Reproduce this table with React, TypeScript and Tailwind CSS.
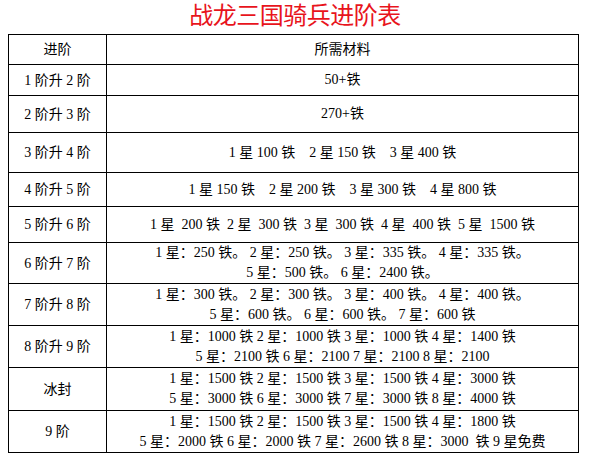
import React from "react";

type Row = { label: string; lines: string[]; h: string };

const rows: Row[] = [
  { label: "1 阶升 2 阶", lines: ["50+铁"], h: "h-[31px]" },
  { label: "2 阶升 3 阶", lines: ["270+铁"], h: "h-[37px]" },
  { label: "3 阶升 4 阶", lines: ["1 星 100 铁    2 星 150 铁    3 星 400 铁"], h: "h-[40px]" },
  { label: "4 阶升 5 阶", lines: ["1 星 150 铁    2 星 200 铁    3 星 300 铁    4 星 800 铁"], h: "h-[34px]" },
  { label: "5 阶升 6 阶", lines: ["1 星  200 铁  2 星  300 铁  3 星  300 铁  4 星  400 铁  5 星  1500 铁"], h: "h-[36px]" },
  {
    label: "6 阶升 7 阶",
    lines: ["1 星：250 铁。 2 星：250 铁。 3 星：335 铁。 4 星：335 铁。", "5 星：500 铁。 6 星：2400 铁。"],
    h: "h-[41px]",
  },
  {
    label: "7 阶升 8 阶",
    lines: ["1 星：300 铁。 2 星：300 铁。 3 星：400 铁。 4 星：400 铁。", "5 星：600 铁。 6 星：600 铁。 7 星：600 铁"],
    h: "h-[42px]",
  },
  {
    label: "8 阶升 9 阶",
    lines: ["1 星：1000 铁 2 星：1000 铁 3 星：1000 铁 4 星：1400 铁", "5 星：2100 铁 6 星：2100 7 星：2100 8 星：2100"],
    h: "h-[42px]",
  },
  {
    label: "冰封",
    lines: ["1 星：1500 铁 2 星：1500 铁 3 星：1500 铁 4 星：3000 铁", "5 星：3000 铁 6 星：3000 铁 7 星：3000 铁 8 星：4000 铁"],
    h: "h-[43px]",
  },
  {
    label: "9 阶",
    lines: ["1 星：1500 铁 2 星：1500 铁 3 星：1500 铁 4 星：1800 铁", "5 星：2000 铁 6 星：2000 铁 7 星：2600 铁 8 星：3000  铁 9 星免费"],
    h: "h-[42px]",
  },
];

export default function App() {
  return (
    <div
      className="w-[590px] h-[460px] bg-white text-black"
      style={{ fontFamily: "'Liberation Serif', 'Noto Sans CJK SC', serif" }}
    >
      <div className="h-[34px] pt-[1px] flex justify-center items-start">
        <div
          className="text-[24px] leading-[26px] text-[#e8141c] tracking-[-0.5px]"
          style={{ fontFamily: "'Noto Sans CJK SC', sans-serif" }}
        >
          战龙三国骑兵进阶表
        </div>
      </div>
      <div className="ml-[8px] w-[571px] border-l border-t border-black text-[14px]">
        <div className="grid grid-cols-[98px_1fr] h-[30px]">
          <div className="border-r border-b border-black flex items-center justify-center">进阶</div>
          <div className="border-r border-b border-black flex items-center justify-center">所需材料</div>
        </div>
        {rows.map((r) => (
          <div key={r.label} className={`grid grid-cols-[98px_1fr] ${r.h}`}>
            <div className="border-r border-b border-black flex items-center justify-center whitespace-pre">
              {r.label}
            </div>
            <div className="border-r border-b border-black flex flex-col items-center justify-center leading-[20px]">
              {r.lines.map((l, i) => (
                <div key={i} className="whitespace-pre">
                  {l}
                </div>
              ))}
            </div>
          </div>
        ))}
      </div>
    </div>
  );
}
